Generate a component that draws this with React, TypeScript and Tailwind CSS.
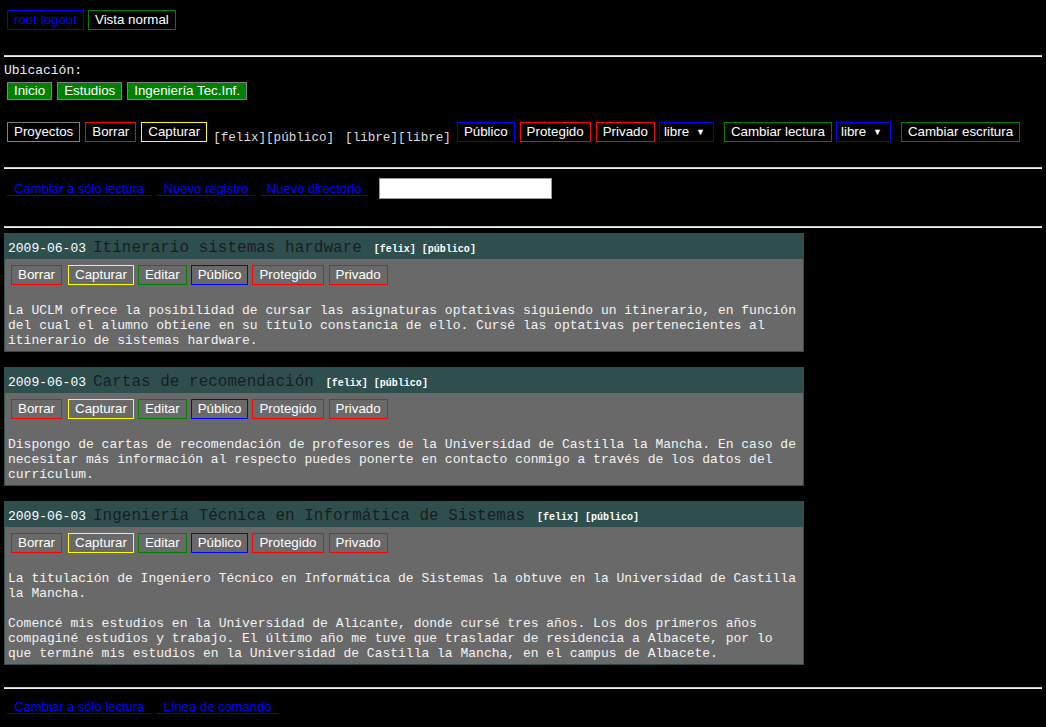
import React from 'react';

const mono = "font-['Liberation_Mono','Courier_New',monospace]";

function Btn({ border, text = 'text-white', bg = '', children }: { border: string; text?: string; bg?: string; children: React.ReactNode }) {
  return (
    <span className={`inline-flex items-center h-[20px] px-[6px] border leading-[16px] whitespace-nowrap ${border} ${text} ${bg}`}>
      {children}
    </span>
  );
}

function Crumb({ children }: { children: React.ReactNode }) {
  return (
    <span className="inline-flex items-center h-[18px] px-[6px] border border-[#808080] bg-[#008000] text-white leading-[16px]">
      {children}
    </span>
  );
}

function Select() {
  return (
    <span className="inline-flex items-center justify-between h-[20px] w-[55px] pl-[4px] pr-[8px] border border-[#0000ff] bg-black text-white leading-[16px]">
      libre <span className="text-[9px]">▼</span>
    </span>
  );
}

function Hr() {
  return <div className="h-[2px] border-t border-[#c8c8c8] border-b border-b-[#f0f0f0]" />;
}

function Link({ children }: { children: React.ReactNode }) {
  return (
    <a href="#" onClick={e => e.preventDefault()} className="text-[13px] text-[#0000ff] underline underline-offset-[2px] whitespace-pre">
      {'  '}{children}{'  '}
    </a>
  );
}

type Post = { title: string; paras: string[] };

const posts: Post[] = [
  {
    title: 'Itinerario sistemas hardware',
    paras: [
      'La UCLM ofrece la posibilidad de cursar las asignaturas optativas siguiendo un itinerario, en función del cual el alumno obtiene en su título constancia de ello. Cursé las optativas pertenecientes al itinerario de sistemas hardware.',
    ],
  },
  {
    title: 'Cartas de recomendación',
    paras: [
      'Dispongo de cartas de recomendación de profesores de la Universidad de Castilla la Mancha. En caso de necesitar más información al respecto puedes ponerte en contacto conmigo a través de los datos del currículum.',
    ],
  },
  {
    title: 'Ingeniería Técnica en Informática de Sistemas',
    paras: [
      'La titulación de Ingeniero Técnico en Informática de Sistemas la obtuve en la Universidad de Castilla la Mancha.',
      'Comencé mis estudios en la Universidad de Alicante, donde cursé tres años. Los dos primeros años compaginé estudios y trabajo. El último año me tuve que trasladar de residencia a Albacete, por lo que terminé mis estudios en la Universidad de Castilla la Mancha, en el campus de Albacete.',
    ],
  },
];

function PostCard({ post }: { post: Post }) {
  return (
    <div className="w-[800px] border border-[#2f4f4f] bg-[#696969]">
      <div className="flex items-baseline h-[25px] pt-[2px] px-[3px] bg-[#2f4f4f] whitespace-nowrap">
        <span className={`${mono} text-[13px] text-white`}>2009-06-03</span>
        <span className={`${mono} text-[16px] text-[#1c1c1c] ml-[7px]`}>{post.title}</span>
        <span className={`${mono} text-[10px] font-bold text-white ml-[12px]`}>[felix] [público]</span>
      </div>
      <div className="px-[3px] pt-[6px] pb-[3px]">
        <div className="flex pl-[3px]">
          <Btn border="border-[#ff0000]">Borrar</Btn>
          <span className="ml-[6px]" />
          <Btn border="border-[#ffff00]">Capturar</Btn>
          <span className="ml-[4px]" />
          <Btn border="border-[#008000]">Editar</Btn>
          <span className="ml-[4px]" />
          <Btn border="border-[#0000ff]">Público</Btn>
          <span className="ml-[4px]" />
          <Btn border="border-[#ff0000]">Protegido</Btn>
          <span className="ml-[5px]" />
          <Btn border="border-[#ff0000]">Privado</Btn>
        </div>
        <div className={`${mono} text-[13px] leading-[15px] text-[#f4f4f4] mt-[18px] flex flex-col gap-[15px]`}>
          {post.paras.map((p, i) => (
            <p key={i}>{p}</p>
          ))}
        </div>
      </div>
    </div>
  );
}

export default function App() {
  return (
    <div className="min-h-screen bg-black px-[4px] pt-[10px] font-['Liberation_Sans',Arial,sans-serif] text-[13.333px]">
      <div className="flex gap-[4px] pl-[3px]">
        <Btn border="border-[#0000ff]" text="text-[#0000ff]">root logout</Btn>
        <Btn border="border-[#008000]">Vista normal</Btn>
      </div>

      <div className="mt-[25px]">
        <Hr />
      </div>

      <div className={`${mono} text-[13px] leading-[15px] text-[#eeeeee] mt-[6px]`}>Ubicación:</div>
      <div className="flex gap-[5px] pl-[3px] mt-[4px]">
        <Crumb>Inicio</Crumb>
        <Crumb>Estudios</Crumb>
        <Crumb>Ingeniería Tec.Inf.</Crumb>
      </div>

      <div className="flex items-start h-[20px] pl-[3px] mt-[22px] whitespace-nowrap">
        <Btn border="border-[#808080]">Proyectos</Btn>
        <span className="ml-[5px]" />
        <Btn border="border-[#ff0000]">Borrar</Btn>
        <span className="ml-[5px]" />
        <Btn border="border-[#ffff00]">Capturar</Btn>
        <span className={`${mono} text-[12.6px] leading-[15px] text-[#dddddd] ml-[6px] mt-[9px]`}>[felix][público]</span>
        <span className={`${mono} text-[12.6px] leading-[15px] text-[#dddddd] ml-[11px] mt-[9px]`}>[libre][libre]</span>
        <span className="ml-[6px]" />
        <Btn border="border-[#0000ff]">Público</Btn>
        <span className="ml-[5px]" />
        <Btn border="border-[#ff0000]">Protegido</Btn>
        <span className="ml-[5px]" />
        <Btn border="border-[#ff0000]">Privado</Btn>
        <span className="ml-[4px]" />
        <Select />
        <span className="ml-[10px]" />
        <Btn border="border-[#008000]">Cambiar lectura</Btn>
        <span className="ml-[4px]" />
        <Select />
        <span className="ml-[10px]" />
        <Btn border="border-[#008000]">Cambiar escritura</Btn>
      </div>

      <div className="mt-[25px]">
        <Hr />
      </div>

      <div className="flex items-center mt-[9px] pl-[3px] h-[21px]">
        <Link>Cambiar a sólo lectura</Link>
        <span className="ml-[5px]" />
        <Link>Nuevo registro</Link>
        <span className="ml-[4px]" />
        <Link>Nuevo directorio</Link>
        <input
          type="text"
          className="ml-[10px] w-[173px] h-[21px] bg-white border border-[#999] outline-none"
        />
      </div>

      <div className="mt-[27px]">
        <Hr />
      </div>

      <div className="flex flex-col gap-[15px] mt-[5px]">
        {posts.map((p, i) => (
          <PostCard key={i} post={p} />
        ))}
      </div>

      <div className="mt-[22px]">
        <Hr />
      </div>

      <div className="flex items-center mt-[8px] pl-[3px] pb-[10px]">
        <Link>Cambiar a sólo lectura</Link>
        <span className="ml-[5px]" />
        <Link>Línea de comando</Link>
      </div>
    </div>
  );
}
